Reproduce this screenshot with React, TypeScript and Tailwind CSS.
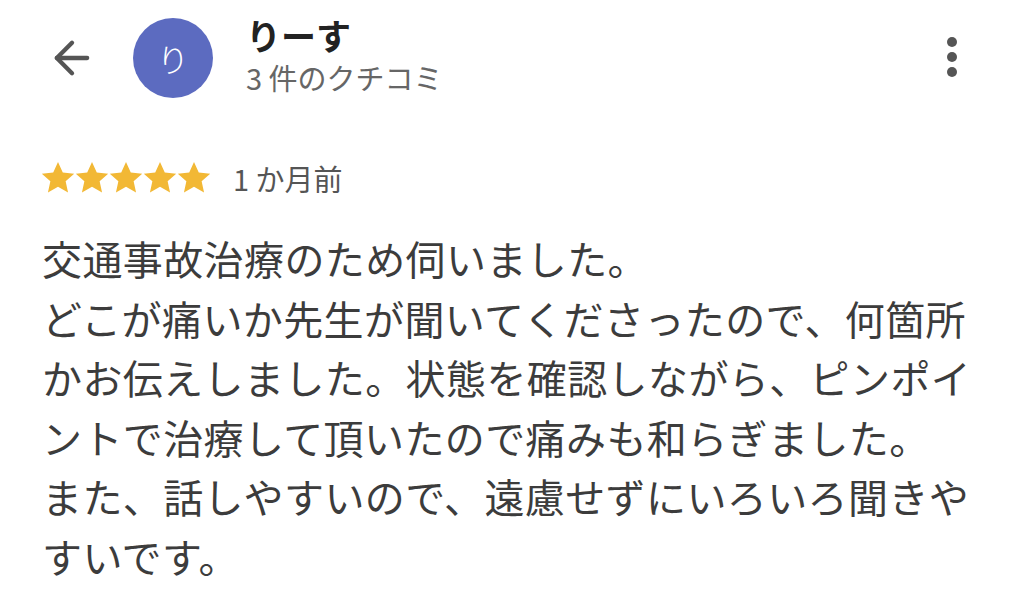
import { ArrowLeft } from "lucide-react";

const font = {
  fontFamily: '"Noto Sans CJK JP", "Noto Sans", sans-serif',
};

function Star() {
  return (
    <svg viewBox="2.2 2.2 19.6 19.6" className="h-[34px] w-[34px]" fill="#f2b835">
      <path d="M12 2.8l2.75 6.02 6.58.67-4.93 4.42 1.4 6.47L12 17.05l-5.8 3.33 1.4-6.47L2.67 9.49l6.58-.67z" />
    </svg>
  );
}

export default function App() {
  return (
    <div
      className="h-[615px] w-[1024px] overflow-hidden bg-white text-[#3a3a3a]"
      style={font}
    >
      <div className="flex h-[116px] items-center pl-[46px] pr-[67px]">
        <ArrowLeft className="h-[52px] w-[52px] text-[#555]" strokeWidth={2} />
        <div className="ml-[35px] flex h-[80px] w-[80px] items-center justify-center rounded-full bg-[#5c6bc0] text-[32px] font-light text-white">
          り
        </div>
        <div className="ml-[33px] flex flex-col pb-[6px]">
          <div className="text-[35px] font-bold leading-[44px] text-[#222]">
            りーす
          </div>
          <div className="text-[29px] leading-[40px] text-[#666]">
            3 件のクチコミ
          </div>
        </div>
        <div className="ml-auto flex flex-col items-center gap-[5px] pb-[2px]">
          <span className="h-[10px] w-[10px] rounded-full bg-[#555]" />
          <span className="h-[10px] w-[10px] rounded-full bg-[#555]" />
          <span className="h-[10px] w-[10px] rounded-full bg-[#555]" />
        </div>
      </div>

      <div className="mt-[44px] flex items-center pl-[41px]">
        <div className="flex">
          <Star />
          <Star />
          <Star />
          <Star />
          <Star />
        </div>
        <span className="ml-[22px] text-[29px] leading-[36px] text-[#555]">
          1 か月前
        </span>
      </div>

      <p className="mt-[33px] ml-[42px] w-[950px] text-[40px] leading-[59.6px] tracking-[0.4px] text-[#3c3c3c]">
        交通事故治療のため伺いました。
        <br />
        どこが痛いか先生が聞いてくださったので、何箇所かお伝えしました。状態を確認しながら、ピンポイントで治療して頂いたので痛みも和らぎました。
        <br />
        また、話しやすいので、遠慮せずにいろいろ聞きやすいです。
      </p>
    </div>
  );
}
